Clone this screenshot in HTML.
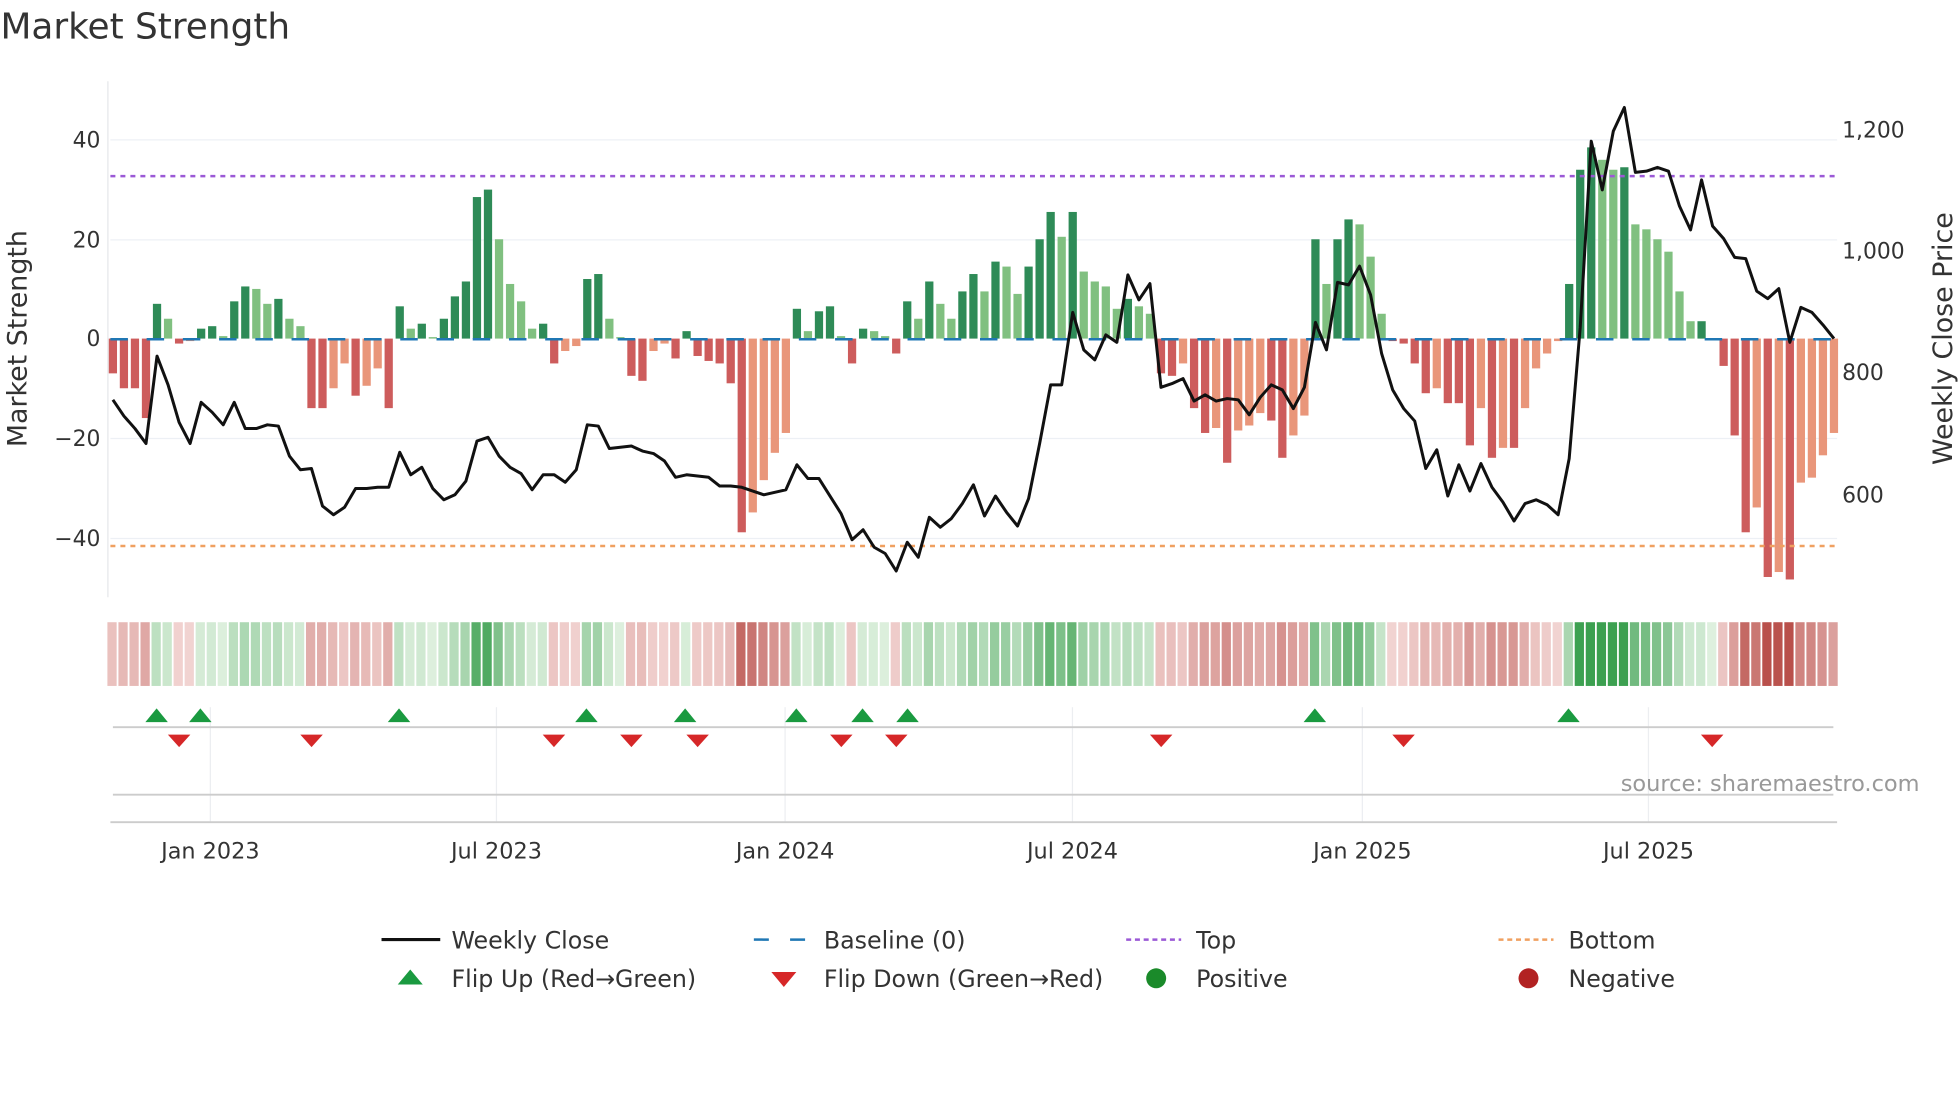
<!DOCTYPE html>
<html><head><meta charset="utf-8"><style>
html,body{margin:0;padding:0;background:#fff;width:1960px;height:1102px;overflow:hidden}
svg{display:block}
text{font-family:"DejaVu Sans","Liberation Sans",sans-serif;fill:#333}
</style></head><body>
<svg id="s" width="1960" height="1102" viewBox="0 0 1568 882" xmlns="http://www.w3.org/2000/svg">
<text x="0" y="31" font-size="28.7" fill="#333">Market Strength</text>
<g stroke="#edf0f5" stroke-width="1">
<line x1="88" y1="112" x2="1470" y2="112"/><line x1="88" y1="192" x2="1470" y2="192"/>
<line x1="88" y1="351" x2="1470" y2="351"/><line x1="88" y1="431" x2="1470" y2="431"/>
</g>
<line x1="86" y1="65" x2="86" y2="478" stroke="#e5e7ea"/>
<g font-size="17.5" text-anchor="end">
<text x="80" y="118">40</text><text x="80" y="198">20</text><text x="80" y="277">0</text>
<text x="80" y="357">−20</text><text x="80" y="437">−40</text></g>
<g font-size="17.5"><text x="1474" y="110">1,200</text><text x="1474" y="207">1,000</text><text x="1474" y="304">800</text><text x="1474" y="402">600</text></g>
<text transform="translate(21,271) rotate(-90)" font-size="21.5" text-anchor="middle">Market Strength</text>
<text transform="translate(1562,271) rotate(-90)" font-size="21.5" text-anchor="middle">Weekly Close Price</text>
<g id="bars"></g>
<line x1="88" y1="271.5" x2="1470" y2="271.5" stroke="#1f77b4" stroke-width="2" stroke-dasharray="14,15"/>
<line x1="88" y1="141" x2="1470" y2="141" stroke="#9b59d6" stroke-width="2" stroke-dasharray="4,4"/>
<line x1="88" y1="437" x2="1470" y2="437" stroke="#f0a060" stroke-width="2" stroke-dasharray="4,4"/>
<polyline id="price" fill="none" stroke="#111" stroke-width="2.4" stroke-linejoin="round"/>
<g id="heat"></g>
<g stroke="#eceef1"><line x1="168" y1="566" x2="168" y2="658"/><line x1="397" y1="566" x2="397" y2="658"/><line x1="628" y1="566" x2="628" y2="658"/><line x1="858" y1="566" x2="858" y2="658"/><line x1="1090" y1="566" x2="1090" y2="658"/><line x1="1319" y1="566" x2="1319" y2="658"/></g>
<line x1="90" y1="582" x2="1467" y2="582" stroke="#ccc" stroke-width="1.5"/>
<line x1="90" y1="636" x2="1467" y2="636" stroke="#ccc" stroke-width="1.5"/>
<line x1="88" y1="658" x2="1470" y2="658" stroke="#ccc" stroke-width="1.5"/>
<g id="flips"></g>
<text x="1536" y="633" font-size="18" fill="#999" style="fill:#999" text-anchor="end">source: sharemaestro.com</text>
<g font-size="17.9" text-anchor="middle"><text x="168" y="687">Jan 2023</text><text x="397" y="687">Jul 2023</text><text x="628" y="687">Jan 2024</text><text x="858" y="687">Jul 2024</text><text x="1090" y="687">Jan 2025</text><text x="1319" y="687">Jul 2025</text></g>
<g font-size="19">
<line x1="305" y1="752" x2="352" y2="752" stroke="#111" stroke-width="2.5"/><text x="361" y="759">Weekly Close</text>
<line x1="603" y1="752" x2="646" y2="752" stroke="#1f77b4" stroke-width="2" stroke-dasharray="12,17"/><text x="659" y="759">Baseline (0)</text>
<line x1="901" y1="752" x2="945" y2="752" stroke="#9b59d6" stroke-width="2" stroke-dasharray="4,3"/><text x="957" y="759">Top</text>
<line x1="1199" y1="752" x2="1243" y2="752" stroke="#f0a060" stroke-width="2" stroke-dasharray="4,3"/><text x="1255" y="759">Bottom</text>
<polygon points="318,788 338,788 328,776" fill="#1a9a40"/><text x="361" y="790">Flip Up (Red→Green)</text>
<polygon points="617,778 637,778 627,790" fill="#d62728"/><text x="659" y="790">Flip Down (Green→Red)</text>
<circle cx="925" cy="783" r="8" fill="#1a8a2a"/><text x="957" y="790">Positive</text>
<circle cx="1223" cy="783" r="8" fill="#b22222"/><text x="1255" y="790">Negative</text>
</g>
</svg>
<script>
var v=[-7,-10,-10,-16,7,4,-1,-0.5,2,2.5,0.5,7.5,10.5,10,7,8,4,2.5,-14,-14,-10,-5,-11.5,-9.5,-6,-14,6.5,2,3,0.3,4,8.5,11.5,28.5,30,20,11,7.5,2,3,-5,-2.5,-1.5,12,13,4,0.3,-7.5,-8.5,-2.5,-1,-4,1.5,-3.5,-4.5,-5,-9,-39,-35,-28.5,-23,-19,6,1.5,5.5,6.5,0.5,-5,2,1.5,0.5,-3,7.5,4,11.5,7,4,9.5,13,9.5,15.5,14.5,9,14.5,20,25.5,20.5,25.5,13.5,11.5,10.5,6,8,6.5,5,-7,-7.5,-5,-14,-19,-18,-25,-18.5,-17.5,-15,-16.5,-24,-19.5,-15.5,20,11,20,24,23,16.5,5,-0.5,-1,-5,-11,-10,-13,-13,-21.5,-14,-24,-22,-22,-14,-6,-3,-0.5,11,34,38.5,36,34,34.5,23,22,20,17.5,9.5,3.5,3.5,0,-5.5,-19.5,-39,-34,-48,-47,-48.5,-29,-28,-23.5,-19];
var py=[320,333,343,355,285,308,338,355,322,330,340,322,343,343,340,341,365,376,375,405,412,406,391,391,390,390,362,380,374,391,400,396,385,353,350,365,374,379,392,380,380,386,376,340,341,359,358,357,361,363,369,382,380,381,382,389,389,390,393,396,394,392,372,383,383,397,411,432,424,438,443,457,434,446,414,422,415,403,388,413,397,410,421,399,355,308,308,250,280,288,268,274,220,240,227,310,307,303,321,316,321,319,320,332,318,308,312,327,310,258,280,226,228,213,236,283,312,327,337,375,360,397,372,393,371,390,402,417,403,400,404,412,367,262,113,152,105,86,138,137,134,137,165,184,144,181,191,206,207,233,239,231,274,246,250,260,271];
var NS="http://www.w3.org/2000/svg";
function el(p,t,a){var e=document.createElementNS(NS,t);for(var k in a)e.setAttribute(k,a[k]);p.appendChild(e);return e;}
var B=document.getElementById('bars'),H=document.getElementById('heat');
function mix(a,b,t){return 'rgb('+[0,1,2].map(function(i){return Math.round(a[i]+(b[i]-a[i])*t)}).join(',')+')';}
var pts=[];
for(var i=0;i<v.length;i++){
 var x=90+8.83*i,val=v[i],p=i?v[i-1]:0;
 var dark=(val>=0&&p>=0&&val>=p)||(val<0&&p<0&&val<=p)||(val>=0&&p<0)||(val<0&&p>=0);
 var c=val>=0?(dark?'#2e8b57':'#80c080'):(dark?'#cd5c5c':'#e9967a');
 var h=Math.abs(val)*3.975,y=val>=0?271-h:271;
 el(B,'rect',{x:x-3.3,y:y,width:6.6,height:Math.max(h,0.5),fill:c});
 var t=Math.min(Math.abs(val)/48,1);
 var hc=val>=0?mix([222,240,222],[60,160,80],Math.min(1,t*1.4)):mix([242,212,210],[185,80,75],t);
 el(H,'rect',{x:x-4.4,y:498,width:7.4,height:51,fill:hc});
 pts.push(x+','+py[i]);
}
document.getElementById('price').setAttribute('points',pts.join(' '));
var F=document.getElementById('flips');
[125,160,319,469,548,637,690,726,1052,1255].forEach(function(x){el(F,'polygon',{points:(x-9)+',578 '+(x+9)+',578 '+x+',567',fill:'#1a9a40'});});
[143,249,443,505,558,673,717,929,1123,1370].forEach(function(x){el(F,'polygon',{points:(x-9)+',588 '+(x+9)+',588 '+x+',598',fill:'#d62728'});});
</script>
</body></html>
